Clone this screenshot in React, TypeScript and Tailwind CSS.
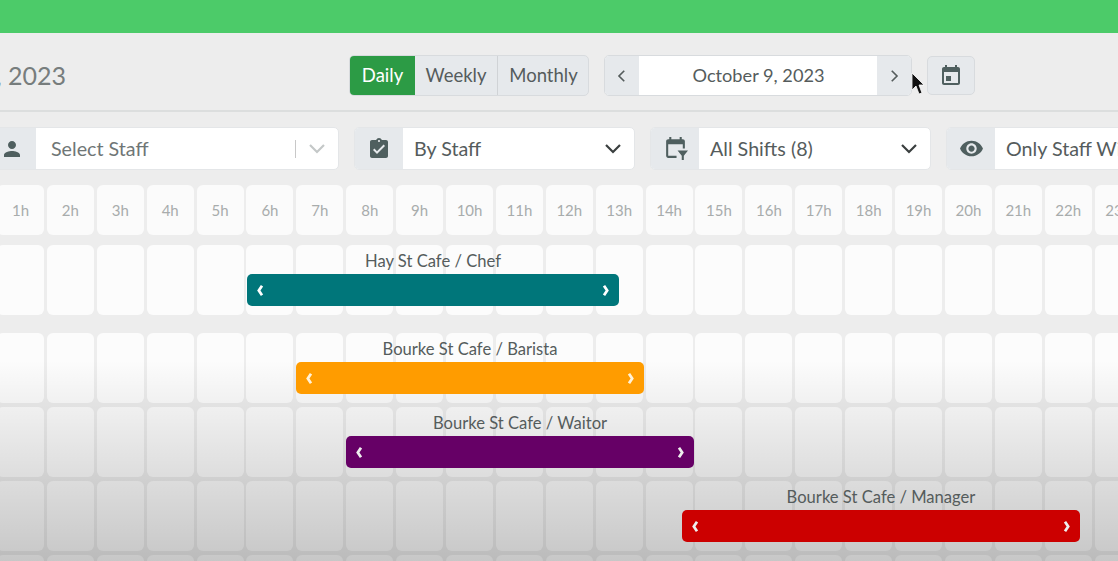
import React from "react";

const M = {
  person: "M12 12c2.21 0 4-1.79 4-4s-1.79-4-4-4-4 1.79-4 4 1.79 4 4 4zm0 2c-2.67 0-8 1.34-8 4v2h16v-2c0-2.66-5.33-4-8-4z",
  clip: "M19 3h-4.18C14.4 1.84 13.3 1 12 1c-1.3 0-2.4.84-2.82 2H5c-1.1 0-2 .9-2 2v14c0 1.1.9 2 2 2h14c1.1 0 2-.9 2-2V5c0-1.1-.9-2-2-2zm-7 0c.55 0 1 .45 1 1s-.45 1-1 1-1-.45-1-1 .45-1 1-1zm-2 14l-4-4 1.41-1.41L10 14.17l6.59-6.59L18 9l-8 8z",
  eye: "M12 4.5C7 4.5 2.73 7.61 1 12c1.73 4.39 6 7.5 11 7.5s9.27-3.11 11-7.5c-1.73-4.39-6-7.5-11-7.5zM12 17c-2.76 0-5-2.24-5-5s2.24-5 5-5 5 2.24 5 5-2.24 5-5 5zm0-8c-1.66 0-3 1.34-3 3s1.34 3 3 3 3-1.34 3-3-1.34-3-3-3z",
  cal: "M12 12H7v5h5v-5zM16 1v2H8V1H6v2H5c-1.11 0-1.99.9-1.99 2L3 19c0 1.1.89 2 2 2h14c1.1 0 2-.9 2-2V5c0-1.1-.9-2-2-2h-1V1h-2zm3 18H5V8h14v11z",
  calFilter: "M16 1v2H8V1H6v2H5c-1.11 0-1.99.9-1.99 2L3 19c0 1.1.89 2 2 2h8v-2H5V8h14v4h2V5c0-1.1-.9-2-2-2h-1V1h-2zM14 14h10l-4 5v4h-2v-4z",
};

function Icon({ d, className }: { d: string; className: string }) {
  return (
    <svg viewBox="0 0 24 24" className={className} fill="#4f5f5f">
      <path d={d} />
    </svg>
  );
}

function Chevron({ dir, className }: { dir: "left" | "right"; className: string }) {
  return (
    <svg viewBox="0 0 10 16" className={className} fill="none" stroke="currentColor" strokeWidth="3.4">
      <path d={dir === "left" ? "M7.5 2 3.5 8l4 6" : "M2.5 2l4 6-4 6"} />
    </svg>
  );
}

function Line({ dir, className }: { dir: "left" | "right" | "down"; className: string }) {
  const d = dir === "left" ? "M15 5l-7 7 7 7" : dir === "right" ? "M9 5l7 7-7 7" : "M5 8l7 7 7-7";
  return (
    <svg viewBox="0 0 24 24" className={className} fill="none" stroke="currentColor" strokeWidth="2.2">
      <path d={d} />
    </svg>
  );
}

function Filter({ icon, label, width, iconSize, faded, grow }: { icon: string; label: string; width: string; iconSize: string; faded?: boolean; grow?: boolean }) {
  return (
    <div className={`flex h-[43px] shrink-0 overflow-hidden rounded-[5px] border border-[#e4e6e8] bg-white ${width}`}>
      <div className="flex w-[48px] shrink-0 items-center justify-center bg-[#e6e9ec]">
        <Icon d={icon} className={iconSize} />
      </div>
      <div className={`flex min-w-0 flex-1 items-center pr-[9px] ${faded ? "pl-[15px]" : "pl-[11px]"}`}>
        <span className={`flex-1 whitespace-nowrap text-[19.7px] ${faded ? "text-[#6f7676]" : "text-[#555c5c]"}`}>{label}</span>
        {faded && <span className="mr-[9px] h-[18px] w-px bg-[#c8c8c8]" />}
        {!grow && <Line dir="down" className={`h-[24px] w-[24px] ${faded ? "text-[#c4c8c8]" : "text-[#3a3f3f]"}`} />}
      </div>
    </div>
  );
}

function Cell({ children, className }: { children?: React.ReactNode; className: string }) {
  return <div className={`w-[47px] shrink-0 rounded-[6px] ${className}`}>{children}</div>;
}

const hours = Array.from({ length: 24 }, (_, i) => i + 1);

function GridRow({ className, bar }: { className: string; bar?: { label: string; pos: string; color: string; chevron: string } }) {
  return (
    <div className={`relative flex gap-x-[2.9px] ${className}`}>
      {hours.map((h) => (
        <Cell key={h} className="h-full bg-[#fcfcfc]" />
      ))}
      {bar && (
        <div className={`absolute bottom-[9px] z-20 ${bar.pos}`}>
          <div className="absolute bottom-[32px] left-0 right-0 mb-[2px] whitespace-nowrap text-center text-[16.6px] leading-[22px] text-[#555c5c]">{bar.label}</div>
          <div className={`flex h-[32px] items-center justify-between rounded-[5px] px-[9px] ${bar.color}`}>
            <Chevron dir="left" className={`h-[13px] w-[8px] ${bar.chevron}`} />
            <Chevron dir="right" className={`h-[13px] w-[8px] ${bar.chevron}`} />
          </div>
        </div>
      )}
    </div>
  );
}

export default function App() {
  return (
    <div className="relative h-[561px] w-[1118px] overflow-hidden bg-[#ededed] font-['Lato','Open_Sans',sans-serif]">
      <div className="h-[33px] bg-[#4ccb69]" />

      <div className="flex h-[79px] items-center border-b-2 border-[#dcdede] pt-[8px]">
        <div className="flex w-[349px] shrink-0 justify-end overflow-hidden pr-[283px]">
          <span className="shrink-0 whitespace-nowrap text-[25px] text-[#777d7d]">October 9, 2023</span>
        </div>
        <div className="flex h-[41px] w-[240px] shrink-0 overflow-hidden rounded-[5px] border border-[#d8dbde] bg-[#e6e9ec] text-[18.5px] text-[#555c5c]">
          <div className="flex w-[65px] items-center justify-center bg-[#2c9b45] text-white">Daily</div>
          <div className="flex w-[83px] items-center justify-center border-r border-[#d0d3d6]">Weekly</div>
          <div className="flex flex-1 items-center justify-center pl-[1px]">Monthly</div>
        </div>
        <div className="ml-[15px] flex h-[41px] w-[308px] shrink-0 overflow-hidden rounded-[5px] border border-[#d8dbde] bg-white">
          <div className="flex w-[34px] items-center justify-center bg-[#e6e9ec] text-[#555c5c]">
            <Line dir="left" className="h-[18px] w-[18px]" />
          </div>
          <div className="flex flex-1 items-center justify-center pl-[1px] text-[18.2px] text-[#555c5c]">October 9, 2023</div>
          <div className="flex w-[34px] items-center justify-center bg-[#e6e9ec] text-[#555c5c]">
            <Line dir="right" className="h-[18px] w-[18px]" />
          </div>
        </div>
        <div className="ml-[15px] flex h-[39px] w-[48px] shrink-0 items-center justify-center rounded-[5px] border border-[#d8dbde] bg-[#e6e9ec]">
          <Icon d={M.cal} className="h-[24px] w-[24px]" />
        </div>
      </div>

      <div className="ml-[-13px] mt-[15px] flex gap-[15px]">
        <Filter icon={M.person} label="Select Staff" width="w-[352px]" iconSize="h-[24px] w-[24px]" faded />
        <Filter icon={M.clip} label="By Staff" width="w-[281px]" iconSize="h-[24px] w-[24px]" />
        <Filter icon={M.calFilter} label="All Shifts (8)" width="w-[281px]" iconSize="h-[25px] w-[25px]" />
        <Filter icon={M.eye} label="Only Staff With Shifts" width="w-[281px]" iconSize="h-[25px] w-[25px]" grow />
      </div>

      <div className="ml-[-3px] mt-[15px] flex gap-x-[2.9px]">
        {hours.map((h) => (
          <Cell key={h} className="flex h-[50px] items-center justify-center bg-[#fbfbfb] text-[15px] text-[#a8acac]">
            {h}h
          </Cell>
        ))}
      </div>

      <div className="ml-[-3px]">
        <GridRow className="mt-[10px] h-[70px]" bar={{ label: "Hay St Cafe / Chef", pos: "left-[250px] w-[372px]", color: "bg-[#00767a]", chevron: "text-white" }} />
        <GridRow className="mt-[18px] h-[70px]" bar={{ label: "Bourke St Cafe / Barista", pos: "left-[299px] w-[348px]", color: "bg-[#ff9c00]", chevron: "text-[#fff2d8]" }} />
        <GridRow className="mt-[4px] h-[70px]" bar={{ label: "Bourke St Cafe / Waitor", pos: "left-[349px] w-[348px]", color: "bg-[#660066]", chevron: "text-[#eeeeee]" }} />
        <GridRow className="mt-[4px] h-[70px]" bar={{ label: "Bourke St Cafe / Manager", pos: "left-[685px] w-[398px]", color: "bg-[#cc0000]", chevron: "text-[#eeeeee]" }} />
        <GridRow className="mt-[4px] h-[70px]" />
      </div>

      <div className="pointer-events-none absolute bottom-0 left-0 right-0 z-10 h-[201px] bg-gradient-to-b from-black/0 to-black/[0.21]" />

      <svg viewBox="0 0 14 24" className="absolute left-[911px] top-[72px] z-30 h-[24px] w-[14px]">
        <path d="M1 1v17l4-4 3 8 3-1-3-8h5z" fill="#111" stroke="#fff" strokeWidth="0.8" />
      </svg>
    </div>
  );
}
